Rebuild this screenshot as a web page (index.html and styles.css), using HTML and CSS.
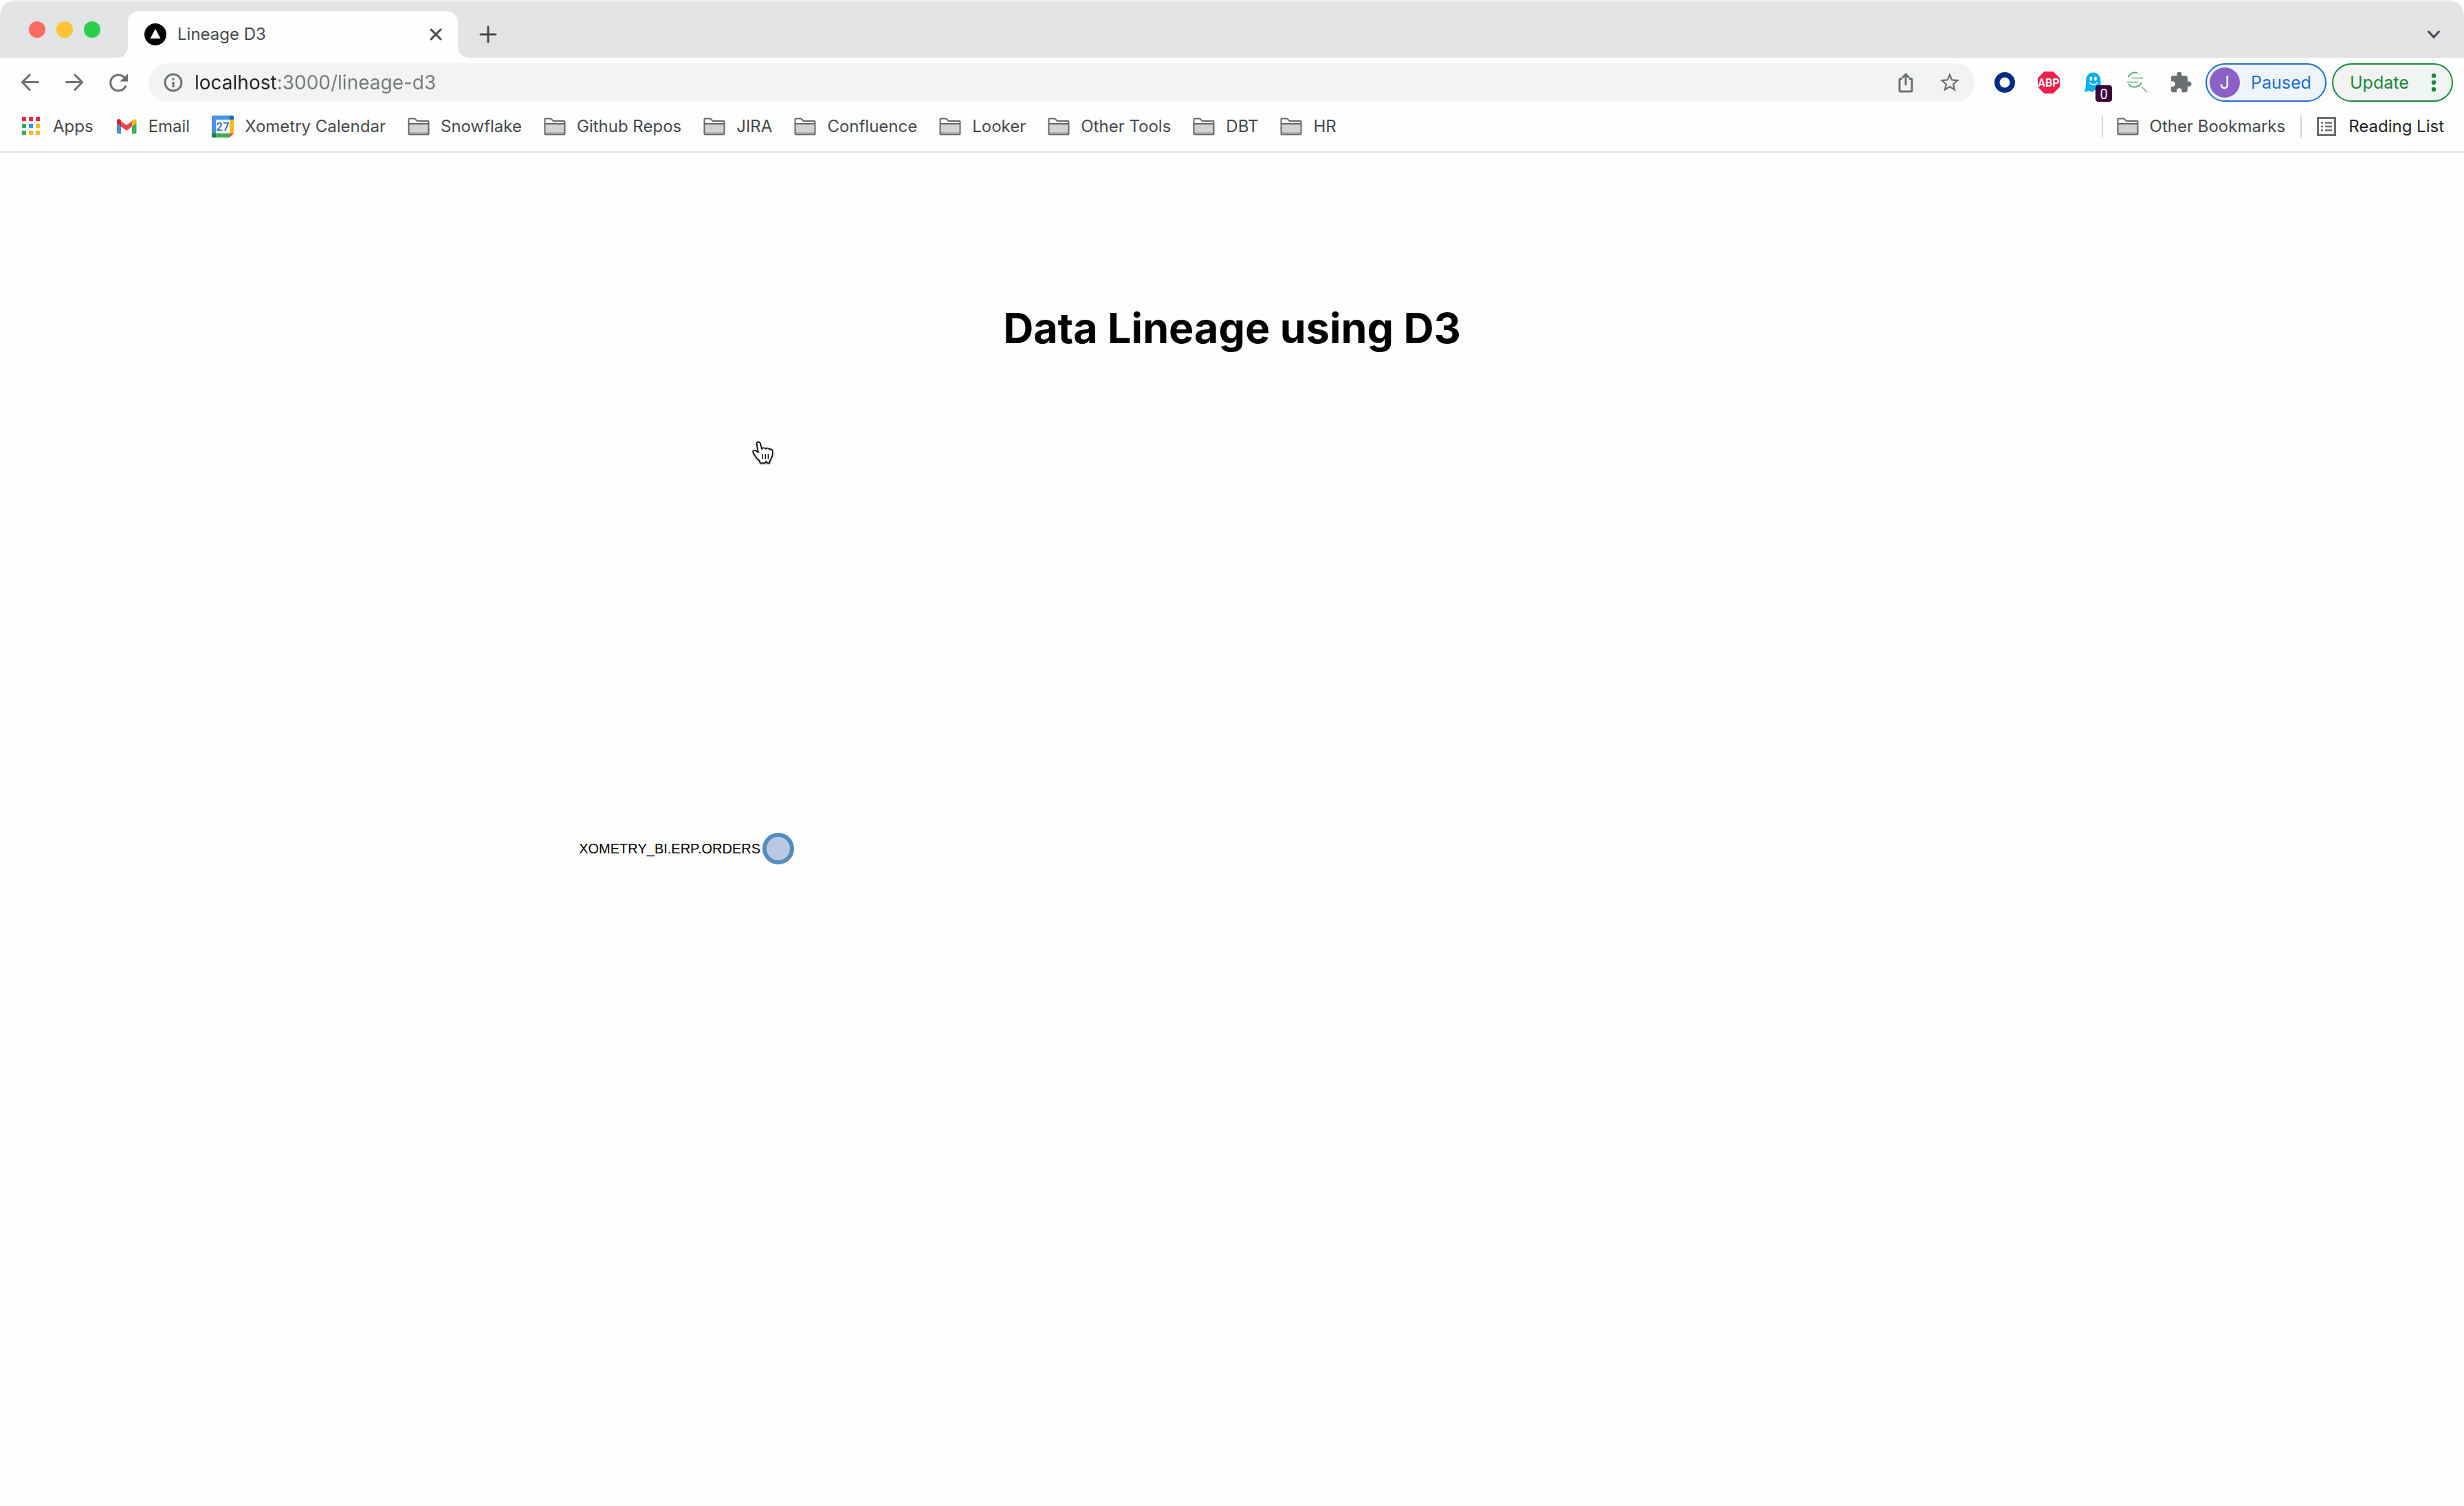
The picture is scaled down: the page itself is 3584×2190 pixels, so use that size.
FILE: index.html
```html
<!DOCTYPE html>
<html lang="en">
<head>
<meta charset="utf-8">
<title>Lineage D3</title>
<link rel="stylesheet" href="styles.css">
</head>
<body>
<svg class="sprite" aria-hidden="true">
  <symbol id="folder" viewBox="0 0 32 32">
    <path d="M1.500 26V4.500H10L14 8H30.500V26Z" fill="#fff"/>
    <path d="M2 12H30V27H2Z" fill="#d2d2d2"/>
    <path d="M2 24H30V26H2Z" fill="#b4b4b4"/>
    <path d="M1.500 27V5.500Q1.500 4.500 2.500 4.500H10L14 8H29.500Q30.500 8 30.500 9V26.500Q30.500 27.500 29.500 27.500H2.500Q1.500 27.500 1.500 26.500M1.500 12H30.500" fill="none" stroke="#626465" stroke-width="2"/>
  </symbol>
</svg>

<header class="browser">
  <div class="tabstrip">
    <div class="lights">
      <button class="light light-red" aria-label="Close window"></button>
      <button class="light light-yellow" aria-label="Minimise window"></button>
      <button class="light light-green" aria-label="Zoom window"></button>
    </div>
    <div class="tab">
      <svg class="icon" viewBox="0 0 32 32"><circle cx="16" cy="16" r="16"/><path d="M16 8L23.500 22H8.500Z" fill="#fff"/></svg>
      <span class="tab-title">Lineage D3</span>
      <button class="icon-button tab-close" aria-label="Close tab">
        <svg class="icon" viewBox="0 0 32 32"><path d="M9 9L23 23M23 9L9 23" class="dark-line"/></svg>
      </button>
    </div>
    <button class="icon-button new-tab" aria-label="New tab">
      <svg class="icon" viewBox="0 0 32 32"><path d="M16 5V27M5 16H27" class="dark-line"/></svg>
    </button>
    <button class="icon-button tab-search" aria-label="Search tabs">
      <svg class="icon" viewBox="0 0 32 32"><path d="M8.500 12L16 20L23.500 12" class="dark-line"/></svg>
    </button>
  </div>

  <div class="toolbar">
    <nav class="nav-buttons" aria-label="History">
      <button class="icon-button" aria-label="Back"><svg class="icon" viewBox="0 0 32 32"><path d="M28.500 15.500H5M16 4L4.500 15.500L16 27.500" class="line"/></svg></button>
      <button class="icon-button" aria-label="Forward"><svg class="icon" viewBox="0 0 32 32"><path d="M3.500 15.500H27M16 4L27.500 15.500L16 27.500" class="line"/></svg></button>
      <button class="icon-button" aria-label="Reload"><svg class="icon" viewBox="0 0 32 32"><path d="M25 9A11.500 11.500 0 1 0 27 20.500" class="line"/><path d="M30 3V14.500H18.500Z" fill="#6c6f71"/></svg></button>
    </nav>
    <form class="omnibox">
      <svg class="icon" viewBox="0 0 32 32"><circle cx="16" cy="16" r="12" class="line"/><path d="M14.500 9.500H17.500V12.500H14.500ZM14.500 15H17.500V23H14.500Z" fill="#6c6f71"/></svg>
      <input class="url" type="text" aria-label="Address" value="localhost:3000/lineage-d3">
      <button type="button" class="icon-button" aria-label="Share"><svg class="icon" viewBox="0 0 32 32"><path d="M11 10.500H8.500Q7 10.500 7 12V27.500Q7 29 8.500 29H23.500Q25 29 25 27.500V12Q25 10.500 23.500 10.500H21M16 20V4.500M11 9L16 4L21 9" class="line"/></svg></button>
      <button type="button" class="icon-button" aria-label="Bookmark this tab"><svg class="icon icon-large" viewBox="0 0 24 24"><path fill="#6c6f71" d="M22 9.240l-7.190-.62L12 2 9.190 8.630 2 9.240l5.460 4.730L5.820 21 12 17.270 18.180 21l-1.630-7.030L22 9.240zM12 15.400l-3.760 2.270 1-4.280-3.320-2.880 4.380-.38L12 6.100l1.710 4.040 4.380.38-3.320 2.880 1 4.280L12 15.400z"/></svg></button>
    </form>
    <div class="extensions">
      <button class="icon-button" aria-label="Okta"><svg class="icon" viewBox="0 0 32 32"><circle cx="16" cy="16" r="11.250" fill="none" stroke="#002a84" stroke-width="7.500"/></svg></button>
      <button class="icon-button" aria-label="Adblock Plus"><svg class="icon" viewBox="0 0 32 32"><path d="M9.500 0H22.500L32 9.500V22.500L22.500 32H9.500L0 22.500V9.500Z" fill="#ee1f4b"/><text x="16" y="22" text-anchor="middle" class="abp">ABP</text></svg></button>
      <button class="icon-button" aria-label="Ghostery">
        <svg class="icon" viewBox="0 0 32 32"><path d="M6 15C6 6 10 1.500 16.500 1.500C23 1.500 27.500 6 27.500 14V24L28 28L23 30L19 27L15 30L11 28L4 30Q6 25 6 15Z" fill="#0bb1f2"/><ellipse cx="13.500" cy="10.500" rx="1.800" ry="3" fill="#fff"/><ellipse cx="20" cy="10.500" rx="1.800" ry="3" fill="#fff"/><path d="M11 16Q16.500 22 23 16" fill="none" stroke="#fff" stroke-width="1.500"/></svg>
        <span class="count">0</span>
      </button>
      <button class="icon-button" aria-label="Page search"><svg class="icon" viewBox="0 0 32 32"><g fill="none" stroke="#55ad78" stroke-width="2"><path d="M3.500 8A11 11 0 0 1 17 2M4 18A11 11 0 0 0 23 16" /><path d="M20 3.500L21.500 4.500M5 21L6 22M24 8V9" stroke="#8cc3a2"/><path d="M9 9.500H25M2 15.500H18M23 22L31 30" stroke="#98bfa8"/></g></svg></button>
      <button class="icon-button" aria-label="Extensions"><svg class="icon icon-large" viewBox="0 0 24 24"><path fill="#6c6f71" d="M20.500 11H19V7c0-1.100-.9-2-2-2h-4V3.500C13 2.120 11.880 1 10.500 1S8 2.120 8 3.500V5H4c-1.100 0-1.990.9-1.990 2v3.800H3.500c1.490 0 2.700 1.210 2.700 2.700s-1.210 2.700-2.700 2.700H2V20c0 1.100.9 2 2 2h3.800v-1.500c0-1.490 1.210-2.700 2.700-2.700 1.490 0 2.700 1.210 2.700 2.700V22H17c1.100 0 2-.9 2-2v-4h1.500c1.380 0 2.500-1.120 2.500-2.500S21.880 11 20.500 11z"/></svg></button>
    </div>
    <button class="pill profile"><span class="avatar">J</span>Paused</button>
    <button class="pill update">Update<svg class="icon" viewBox="0 0 32 32"><g fill="#1b873d"><circle cx="16" cy="6" r="3.200"/><circle cx="16" cy="16" r="3.200"/><circle cx="16" cy="26" r="3.200"/></g></svg></button>
  </div>

  <nav class="bookmarks" aria-label="Bookmarks">
    <a class="bookmark" href="#"><svg class="icon" viewBox="0 0 32 32"><path d="M3 2H9V8H3ZM13 2H19V8H13ZM23 2H29V8H23Z" fill="#ea2b46"/><path d="M3 12H9V18H3ZM3 22H9V28H3Z" fill="#37aa58"/><path d="M13 12H19V18H13Z" fill="#1d9df0"/><path d="M23 12H29V18H23ZM13 22H19V28H13ZM23 22H29V28H23Z" fill="#f7bb15"/></svg>Apps</a>
    <a class="bookmark" href="#"><svg class="icon" viewBox="0 0 32 32"><path d="M2 9L8 12V26.500H4Q2 26.500 2 24.500Z" fill="#4891ea"/><path d="M24 12L30.500 9V24.500Q30.500 26.500 28.500 26.500H24Z" fill="#3cae5c"/><path d="M24 8Q27 4 29.500 6Q30.500 7 30.500 8V11L24 16Z" fill="#f7bb15"/><path d="M8 8L16 14L24 8V16L16 22L8 16Z" fill="#ea4655"/><path d="M2 11V8Q2 5 5 5Q6 5 8 7V16Z" fill="#d8261f"/></svg>Email</a>
    <a class="bookmark" href="#"><svg class="icon" viewBox="0 0 32 32"><path d="M2 0H26V6H6V26H0V2Q0 0 2 0Z" fill="#4891ea"/><path d="M26 0H30Q32 0 32 2V6H26Z" fill="#1b67d2"/><path d="M26 6H32V26H26Z" fill="#f7bb15"/><path d="M6 26H26V32H6Z" fill="#3cae5c"/><path d="M0 26H6V32H2Q0 32 0 30Z" fill="#1b8038"/><path d="M26 26H32L26 32Z" fill="#ea4655"/><path d="M6 6H26V26H6Z" fill="#fff"/><text x="16" y="22" text-anchor="middle" class="day">27</text></svg>Xometry Calendar</a>
    <a class="bookmark" href="#"><svg class="icon"><use href="#folder"/></svg>Snowflake</a>
    <a class="bookmark" href="#"><svg class="icon"><use href="#folder"/></svg>Github Repos</a>
    <a class="bookmark" href="#"><svg class="icon"><use href="#folder"/></svg>JIRA</a>
    <a class="bookmark" href="#"><svg class="icon"><use href="#folder"/></svg>Confluence</a>
    <a class="bookmark" href="#"><svg class="icon"><use href="#folder"/></svg>Looker</a>
    <a class="bookmark" href="#"><svg class="icon"><use href="#folder"/></svg>Other Tools</a>
    <a class="bookmark" href="#"><svg class="icon"><use href="#folder"/></svg>DBT</a>
    <a class="bookmark" href="#"><svg class="icon"><use href="#folder"/></svg>HR</a>
    <div class="bookmarks-end">
      <a class="bookmark" href="#"><svg class="icon"><use href="#folder"/></svg>Other Bookmarks</a>
      <a class="bookmark reading-list" href="#"><svg class="icon" viewBox="0 0 32 32"><path d="M3.500 3.500H28.500V28.500H3.500Z" fill="#fff" stroke="#6c6f71" stroke-width="3"/><path d="M8 10.500H11M14 10.500H24M8 16H11M14 16H24M8 21.500H11M14 21.500H24" stroke="#6c6f71" stroke-width="2.600"/></svg>Reading List</a>
    </div>
  </nav>
</header>

<main class="page">
  <h1 class="heading">Data Lineage using D3</h1>
  <svg class="graph" role="img" aria-label="Lineage graph">
    <g transform="translate(1132 722)">
      <circle r="20" class="node"/>
      <text x="-26" y="7" text-anchor="end" class="node-label">XOMETRY_BI.ERP.ORDERS</text>
    </g>
  </svg>
</main>

<svg class="pointer" viewBox="0 0 180 180" aria-hidden="true">
  <path d="M70 38C62 38 60 44 63 52L69 84L59 77C50 71 42 76 47 85C53 96 62 110 74 120L77 130H97L103 123L109 130H118L119 121C126 111 131 103 131 90V77C130 68 121 67 118 72C116 63 104 63 101 69C98 62 88 62 84 69L78 45C76 40 74 38 70 38Z" fill="#fff" stroke="#000" stroke-width="5" stroke-linejoin="round"/>
  <path d="M88 90V113M100 90V113M112 90V113" stroke="#000" stroke-width="4"/>
</svg>
</body>
</html>
```
FILE: styles.css
```css
* {
  box-sizing: border-box;
}

body {
  margin: 0;
  min-height: 100vh;
  display: flex;
  flex-direction: column;
  background: #fefefe;
  color: #46494b;
  font: 24px/32px Inter, sans-serif;
}

button,
input {
  margin: 0;
  padding: 0;
  border: 0;
  background: none;
  color: inherit;
  font: inherit;
}

.sprite {
  position: absolute;
  width: 0;
  height: 0;
}

.icon {
  flex: none;
  display: block;
  width: 32px;
  height: 32px;
}

.icon-large {
  width: 34px;
  height: 34px;
}

.line {
  fill: none;
  stroke: #6c6f71;
  stroke-width: 3;
}

.dark-line {
  fill: none;
  stroke: #46494b;
  stroke-width: 3;
  stroke-linecap: round;
}

.icon-button {
  position: relative;
  flex: none;
  display: flex;
  align-items: center;
  justify-content: center;
  width: 64px;
  height: 56px;
}

/* Tab strip */

.tabstrip {
  display: flex;
  align-items: center;
  height: 84px;
  padding: 16px 12px 0 42px;
  background: #e1e3e5;
  border-radius: 22px 22px 0 0;
  box-shadow: inset 0 2px 0 #eff0f0;
}

.lights {
  display: flex;
  gap: 16px;
  width: 144px;
  padding-bottom: 14px;
}

.light {
  width: 24px;
  height: 24px;
  border-radius: 50%;
}

.light-red {
  background: #fe6b60;
}

.light-yellow {
  background: #fec436;
}

.light-green {
  background: #2ccf48;
}

.tab {
  position: relative;
  display: flex;
  align-items: center;
  width: 480px;
  height: 68px;
  padding-left: 24px;
  background: #fefefe;
  border-radius: 16px 16px 0 0;
}

/* Flared feet where the tab meets the toolbar */
.tab::before,
.tab::after {
  content: "";
  position: absolute;
  bottom: 0;
  width: 16px;
  height: 16px;
}

.tab::before {
  right: 100%;
  background: radial-gradient(circle at 0 0, transparent 16px, #fefefe 16px);
}

.tab::after {
  left: 100%;
  background: radial-gradient(circle at 100% 0, transparent 16px, #fefefe 16px);
}

.tab-title {
  flex: 1;
  padding-left: 16px;
}

.new-tab {
  margin-left: 12px;
}

.tab-search {
  margin-left: auto;
}

/* Toolbar */

.toolbar {
  display: flex;
  padding: 8px 16px 0 12px;
}

.nav-buttons,
.extensions {
  display: flex;
}

.extensions {
  margin-right: 4px;
}

.omnibox {
  flex: 1;
  display: flex;
  align-items: center;
  height: 56px;
  margin: 0 12px;
  padding: 0 4px 0 20px;
  border-radius: 28px;
  background: #f2f4f4;
}

.url {
  flex: 1;
  min-width: 0;
  height: 40px;
  margin-left: 15px;
  color: #76797a;
  font-size: 28px;
  /* Host name darker than the rest of the address */
  background: linear-gradient(90deg, #202124 120px, #76797a 120px);
  -webkit-background-clip: text;
  background-clip: text;
  -webkit-text-fill-color: transparent;
}

.abp {
  fill: #fff;
  font: 700 16px Roboto, sans-serif;
}

.day {
  fill: #1b67d2;
  font: 500 17px Roboto, sans-serif;
}

.count {
  position: absolute;
  right: 4px;
  bottom: 0;
  width: 24px;
  height: 24px;
  border-radius: 4px;
  background: #3c0039;
  color: #fff;
  font: 20px/26px Roboto, sans-serif;
  text-align: center;
}

.pill {
  display: flex;
  align-items: center;
  height: 56px;
  border: 2px solid;
  border-radius: 28px;
  font-size: 25px;
}

.profile {
  width: 176px;
  padding-left: 4px;
  gap: 16px;
  border-color: #1b6fd3;
  background: #eff4fc;
  color: #1b6fd3;
}

.avatar {
  width: 44px;
  height: 44px;
  border-radius: 50%;
  background: #8961c8;
  color: #fff;
  line-height: 44px;
  text-align: center;
}

.update {
  width: 176px;
  margin-left: 8px;
  padding: 0 10px 0 24px;
  justify-content: space-between;
  border-color: #1b873d;
  background: #f1f4f3;
  color: #1b873d;
}

/* Bookmarks bar */

.bookmarks {
  display: flex;
  align-items: center;
  gap: 32px;
  height: 74px;
  padding: 0 29px;
  border-bottom: 2px solid #dddedf;
}

.bookmark {
  display: flex;
  align-items: center;
  gap: 16px;
  color: inherit;
  text-decoration: none;
  white-space: nowrap;
}

.bookmarks-end {
  display: flex;
  gap: 22px;
  margin-left: auto;
}

.bookmarks-end .bookmark {
  padding-left: 20px;
  border-left: 2px solid #d4d6d8;
}

.bookmarks-end .reading-list {
  color: #202124;
}

/* Page */

.page {
  flex: 1;
  display: flex;
  flex-direction: column;
  padding-top: 220px;
}

.heading {
  margin: 0;
  color: #000;
  font-size: 61px;
  font-weight: 700;
  line-height: 70px;
  text-align: center;
}

.graph {
  flex: 1;
  display: block;
  width: 100%;
  min-height: 800px;
}

.node {
  fill: #b9c8e3;
  stroke: #528dbe;
  stroke-width: 6;
}

.node-label {
  fill: #000;
  font: 20px "Liberation Sans", sans-serif;
}

.pointer {
  position: absolute;
  left: 1080px;
  top: 630px;
  width: 60px;
  height: 60px;
  filter: drop-shadow(0 1px 1px rgba(0, 0, 0, 0.4));
}
```
